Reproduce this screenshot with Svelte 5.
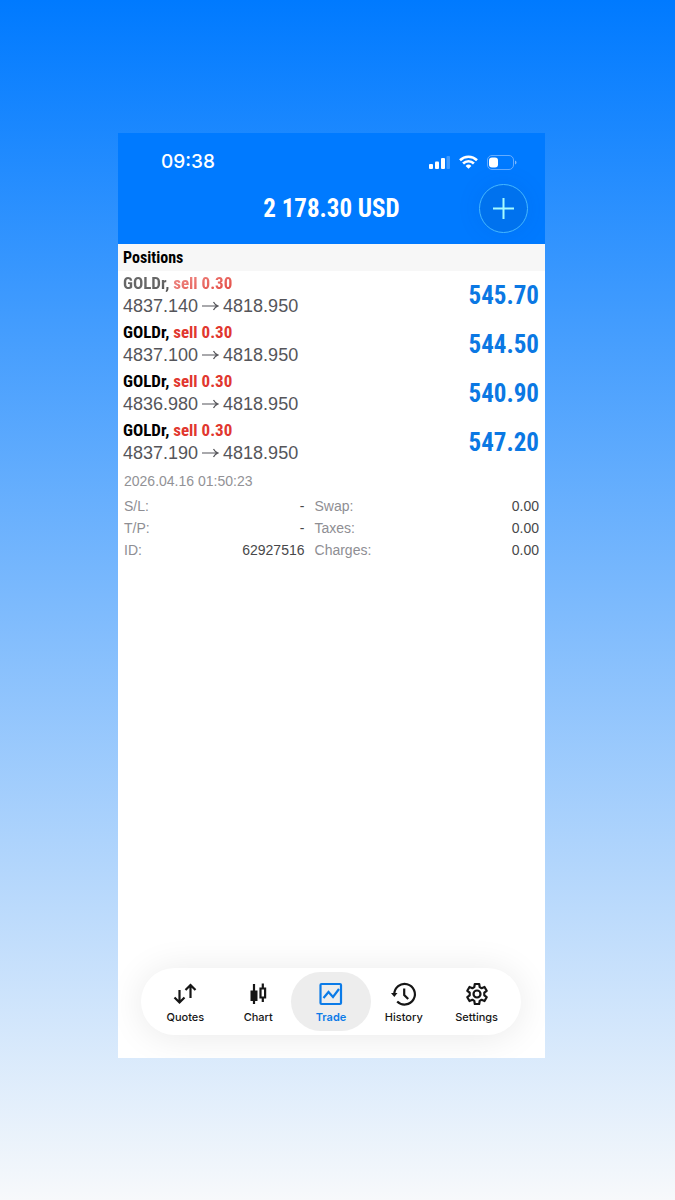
<script>
    let activeTab = $state('Trade');

    const tabs = ['Quotes', 'Chart', 'Trade', 'History', 'Settings'];

    const positions = [
        { symbol: 'GOLDr', side: 'sell', volume: '0.30', open: '4837.140', current: '4818.950', profit: '545.70' },
        { symbol: 'GOLDr', side: 'sell', volume: '0.30', open: '4837.100', current: '4818.950', profit: '544.50' },
        { symbol: 'GOLDr', side: 'sell', volume: '0.30', open: '4836.980', current: '4818.950', profit: '540.90' },
        { symbol: 'GOLDr', side: 'sell', volume: '0.30', open: '4837.190', current: '4818.950', profit: '547.20' }
    ];

    const details = [
        ['S/L:', '-', 'Swap:', '0.00'],
        ['T/P:', '-', 'Taxes:', '0.00'],
        ['ID:', '62927516', 'Charges:', '0.00']
    ];
</script>

<div class="page">
    <div class="phone">
        <header>
            <div class="status">
                <span class="time">09:38</span>
                <div class="indicators">
                    <svg width="21" height="14" viewBox="0 0 21 14" fill="#fff">
                        <rect x="0" y="9" width="4" height="5" rx="1" />
                        <rect x="6" y="6.5" width="4" height="7.5" rx="1" />
                        <rect x="12" y="3" width="4" height="11" rx="1" />
                        <rect x="17.5" y="1" width="3.5" height="13" rx="1" opacity="0.25" />
                    </svg>
                    <svg width="19" height="14" viewBox="0 0 19 14" fill="none" stroke="#fff" stroke-width="2.6">
                        <path d="M1 5.2a12.2 12.2 0 0 1 17 0" />
                        <path d="M4.1 8.5a7.7 7.7 0 0 1 10.8 0" />
                        <path d="M9.5 13.8 6.6 11a4.2 4.2 0 0 1 5.8 0z" fill="#fff" stroke="none" />
                    </svg>
                    <svg width="30" height="15" viewBox="0 0 30 15">
                        <rect x="0.5" y="0.5" width="26" height="14" rx="4.5" fill="none" stroke="#7db9ff" stroke-opacity="0.8" />
                        <rect x="2" y="2.5" width="9" height="10" rx="3" fill="#fff" />
                        <path d="M28 5.5c2 .8 2 3.2 0 4z" fill="#7db9ff" />
                    </svg>
                </div>
            </div>
            <div class="title">
                <h1>2 178.30 USD</h1>
                <button class="add" aria-label="New order">
                    <svg width="21" height="21" viewBox="0 0 21 21" stroke="#a6fbff" stroke-width="2">
                        <path d="M10.5 0v21M0 10.5h21" />
                    </svg>
                </button>
            </div>
        </header>

        <main>
            <h2>Positions</h2>
            <ul>
                {#each positions as p, i}
                    <li>
                        <div>
                            <div class="name" class:faded={i === 0}>{p.symbol}, <span>{p.side} {p.volume}</span></div>
                            <div class="prices">
                                {p.open}
                                <svg width="17" height="14" viewBox="0 0 17 14" fill="none" stroke="#55555a" stroke-width="1.2">
                                    <path d="M0 6h16M11.500 2q1.500 3 4.500 4q-3 1-4.500 4" />
                                </svg>
                                {p.current}
                            </div>
                        </div>
                        <strong>{p.profit}</strong>
                    </li>
                {/each}
            </ul>
            <div class="opened">2026.04.16 01:50:23</div>
            <table>
                <colgroup>
                    <col class="label" />
                    <col class="value" />
                    <col />
                    <col />
                </colgroup>
                <tbody>
                    {#each details as row}
                        <tr>
                            <th>{row[0]}</th>
                            <td>{row[1]}</td>
                            <th class="second">{row[2]}</th>
                            <td>{row[3]}</td>
                        </tr>
                    {/each}
                </tbody>
            </table>
        </main>

        <nav>
            {#each tabs as tab}
                <button class="tab" class:active={tab === activeTab} onclick={() => (activeTab = tab)}>
                    <svg width="24" height="24" viewBox="0 0 24 24" fill="none" stroke="currentColor" stroke-width="2.2">
                        {#if tab === 'Quotes'}
                            <path d="M6.5 8v12M1.500 15.500l5 5 5-5M17.500 16V3.500M12.500 8l5-5 5 5" />
                        {:else if tab === 'Chart'}
                            <path d="M8 2v20M16.800 1.500V6M16.800 16v4" />
                            <path d="M4.500 8.500h7v10.500h-7z" fill="currentColor" stroke="none" />
                            <path d="M14.500 6.500h4.600v9h-4.600z" />
                        {:else if tab === 'Trade'}
                            <rect x="1.500" y="2" width="20.500" height="20" rx="1" />
                            <path d="M4.500 16l5-6 4.500 5 6-8" />
                        {:else if tab === 'History'}
                            <path d="M2.300 12.500A10.300 10.300 0 1 1 5.200 19.400M12.200 6.500V13l4 4" />
                            <path d="M-1 11h6.500l-3.200 4z" fill="currentColor" stroke="none" />
                        {:else}
                            <path d="M9.800 2h4.400l.5 3.100 1.900 1.100 2.900-1.200 2.200 3.800-2.400 1.900v2.600l2.400 1.900-2.200 3.800-2.900-1.200-1.900 1.100-.5 3.100H9.800l-.5-3.100-1.900-1.100L4.500 19l-2.200-3.800 2.400-1.900v-2.600L2.300 8.800 4.500 5l2.900 1.200 1.900-1.100z" stroke-linejoin="round" />
                            <circle cx="12" cy="12" r="3.500" />
                        {/if}
                    </svg>
                    <span>{tab}</span>
                </button>
            {/each}
        </nav>
    </div>
</div>

<style>
    :global(body) {
        margin: 0;
    }
    .page {
        box-sizing: border-box;
        min-height: 100vh;
        padding: 133px 130px 142px 118px;
        display: flex;
        background: linear-gradient(#007aff, #f7f9fb);
        font-family: "Liberation Sans", Arial, sans-serif;
    }
    .phone {
        flex: 1;
        display: flex;
        flex-direction: column;
        overflow: hidden;
        background: #fff;
    }
    header {
        height: 111px;
        background: #007aff;
        color: #fff;
    }
    .status {
        display: flex;
        justify-content: space-between;
        align-items: center;
        padding: 17px 28px 0 43px;
        height: 24px;
    }
    .time {
        font: 500 19px/24px Inter, sans-serif;
    }
    .indicators {
        display: flex;
        align-items: center;
        gap: 9px;
    }
    .title {
        display: grid;
        grid-template-columns: 1fr auto 1fr;
        align-items: center;
        padding: 10px 17px 0;
    }
    h1, h2, .name, strong {
        font-family: "Roboto Condensed", "Arial Narrow", sans-serif;
        font-weight: bold;
        margin: 0;
    }
    h1 {
        grid-column: 2;
        font-size: 25px;
        line-height: 32px;
    }
    button {
        border: 0;
        padding: 0;
        background: none;
        cursor: pointer;
    }
    .add {
        justify-self: end;
        display: grid;
        place-items: center;
        width: 49px;
        height: 49px;
        border: 1px solid #45b8ff;
        border-radius: 50%;
        background: #0072ee;
        box-shadow: 0 0 24px rgba(0, 70, 160, 0.1);
    }
    main {
        flex: 1;
    }
    h2 {
        padding: 1px 5px 0;
        background: #f7f7f7;
        font-size: 16px;
        line-height: 26px;
    }
    ul {
        list-style: none;
        margin: 0;
        padding: 0 6px 1px 5px;
    }
    li {
        display: flex;
        justify-content: space-between;
        align-items: center;
        height: 49px;
    }
    .name {
        font-size: 17px;
        line-height: 22px;
        color: #000;
    }
    .name span {
        color: #e1372f;
    }
    /* first row slides under the section heading */
    .faded {
        -webkit-mask-image: linear-gradient(160deg, rgba(0, 0, 0, 0.6) 30%, #000 80%);
        mask-image: linear-gradient(160deg, rgba(0, 0, 0, 0.6) 30%, #000 80%);
    }
    .prices {
        display: flex;
        align-items: center;
        gap: 4px;
        font-size: 18px;
        line-height: 25px;
        color: #55555a;
    }
    strong {
        font-size: 25px;
        line-height: 32px;
        color: #0b78e3;
    }
    .opened {
        padding: 0 6px;
        font-size: 14px;
        line-height: 27px;
        color: #929296;
    }
    table {
        width: 100%;
        padding: 0 6px;
        border-spacing: 0;
        table-layout: fixed;
        font-size: 14px;
        line-height: 22px;
    }
    .label {
        width: 15%;
    }
    .value {
        width: 28.5%;
    }
    th, td {
        padding: 0;
    }
    th {
        text-align: left;
        font-weight: normal;
        color: #8e8e93;
    }
    .second {
        padding-left: 10px;
    }
    td {
        text-align: right;
        color: #48484a;
    }
    nav {
        display: grid;
        grid-template-columns: repeat(5, 1fr);
        margin: 0 24px 23px 23px;
        padding: 4px 8px;
        border-radius: 34px;
        background: #fff;
        box-shadow: 0 2px 36px rgba(0, 0, 0, 0.09);
    }
    .tab {
        display: flex;
        flex-direction: column;
        align-items: center;
        gap: 3px;
        margin: 0 -4px;
        padding: 10px 0 6px;
        border-radius: 30px;
        color: #161616;
        font: 500 11px/16px Inter, sans-serif;
    }
    .tab svg {
        overflow: visible;
    }
    .active {
        background: #ededed;
        color: #0b7be8;
        font-weight: 600;
    }
</style>
